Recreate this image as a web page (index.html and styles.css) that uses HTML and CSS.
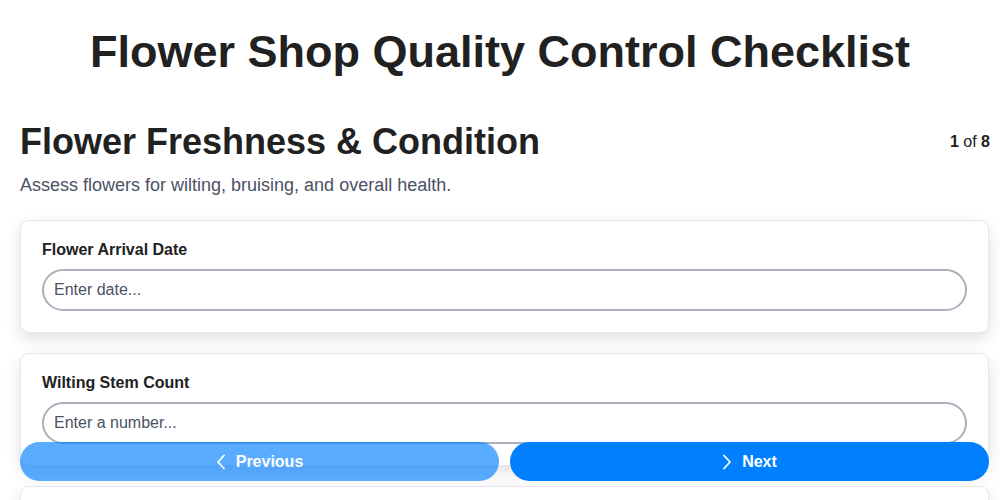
FILE: index.html
```html
<!DOCTYPE html>
<html lang="en">
<head>
<meta charset="utf-8">
<title>Flower Shop Quality Control Checklist</title>
<link rel="stylesheet" href="styles.css">
</head>
<body>
  <h1 class="page-title">Flower Shop Quality Control Checklist</h1>

  <section class="step">
    <div class="step-head">
      <h2 class="step-title">Flower Freshness &amp; Condition</h2>
      <div class="step-count"><b>1</b> of <b>8</b></div>
    </div>
    <p class="step-desc">Assess flowers for wilting, bruising, and overall health.</p>

    <div class="cards">
      <div class="card">
        <label class="field-label" for="arrival">Flower Arrival Date</label>
        <input class="field-input" id="arrival" type="text" placeholder="Enter date...">
      </div>
      <div class="card">
        <label class="field-label" for="wilting">Wilting Stem Count</label>
        <input class="field-input" id="wilting" type="text" placeholder="Enter a number...">
      </div>
      <div class="card">
        <label class="field-label" for="bruising">Bruised Petal Count</label>
        <input class="field-input" id="bruising" type="text" placeholder="Enter a number...">
      </div>
    </div>
  </section>

  <nav class="pager">
    <button class="pager-btn prev" type="button">
      <svg class="chev" width="10" height="16" viewBox="0 0 10 16" aria-hidden="true"><path d="M8 1.5 2 8l6 6.5" fill="none" stroke="currentColor" stroke-width="1.8" stroke-linecap="round" stroke-linejoin="round"/></svg>
      Previous
    </button>
    <button class="pager-btn next" type="button">
      <svg class="chev" width="10" height="16" viewBox="0 0 10 16" aria-hidden="true"><path d="M2 1.5 8 8l-6 6.5" fill="none" stroke="currentColor" stroke-width="1.8" stroke-linecap="round" stroke-linejoin="round"/></svg>
      Next
    </button>
  </nav>
</body>
</html>
```
FILE: styles.css
```css
* { box-sizing: border-box; }

html, body { margin: 0; }

body {
  font-family: "Liberation Sans", Arial, sans-serif;
  color: #212121;
  background: #ffffff;
  padding: 26px 10px 0 20px;
}

/* the heading is centred on the whole window, not the padded column */
.page-title {
  margin: 0 0 0 -10px;
  text-align: center;
  font-size: 45px;
  font-weight: 700;
  line-height: 52px;
  color: #212121;
}

.step { margin-top: 43px; }

.step-head {
  display: flex;
  align-items: center;
  justify-content: space-between;
}

.step-title {
  margin: 0;
  font-size: 36px;
  line-height: 42px;
  font-weight: 700;
  color: #212121;
}

.step-count {
  font-size: 16px;
  color: #212121;
}

.step-desc {
  margin: 12px 0 0;
  font-size: 18px;
  line-height: 21px;
  color: #4a5264;
}

.cards {
  margin-top: 24px;
  display: flex;
  flex-direction: column;
  gap: 20px;
}

.card {
  display: flex;
  flex-direction: column;
  gap: 10px;
  padding: 19px 21px 21px;
  margin-right: 1px;
  border: 1px solid #e6e7ec;
  border-radius: 9px;
  background: #fff;
  box-shadow: 0 6px 16px rgba(0, 0, 0, 0.12);
}

.field-label {
  font-size: 16px;
  line-height: 19px;
  font-weight: 700;
  color: #212121;
}

.field-input {
  width: 100%;
  height: 42px;
  padding: 0 10px;
  border: 2px solid #a9b1ba;
  border-radius: 21px;
  font-family: inherit;
  font-size: 16px;
  color: #212121;
  background: #fff;
  outline: none;
}

.field-input::placeholder { color: #4a5264; opacity: 1; }

.pager {
  position: fixed;
  left: 20px;
  right: 11px;
  bottom: 19px;
  display: grid;
  grid-template-columns: 1fr 1fr;
  gap: 11px;
}

.pager-btn {
  height: 39px;
  border: none;
  border-radius: 20px;
  display: flex;
  align-items: center;
  justify-content: center;
  gap: 10px;
  font-family: inherit;
  font-size: 16px;
  font-weight: 700;
  color: #fff;
  background: #0080ff;
  cursor: pointer;
}

.pager-btn.prev { opacity: 0.65; }

.chev { display: block; }
```
